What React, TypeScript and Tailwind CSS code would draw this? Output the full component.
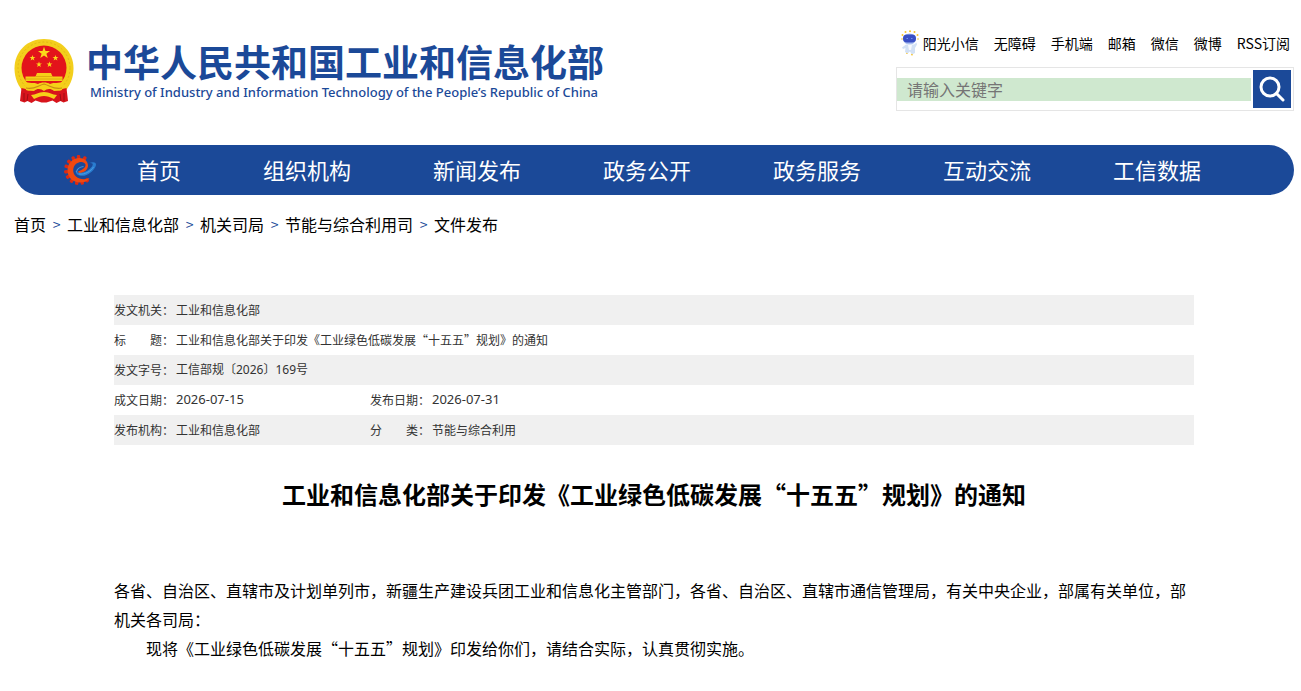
import { type ReactNode } from "react";

const topLinks = ["无障碍", "手机端", "邮箱", "微信", "微博", "RSS订阅"];

const navItems = ["组织机构", "新闻发布", "政务公开", "政务服务", "互动交流", "工信数据"];

const crumbs = ["首页", "工业和信息化部", "机关司局", "节能与综合利用司", "文件发布"];

const star = "M0-5 1.2-1.6 4.8-1.6 1.9.6 3 4 0 1.9-3 4-1.9.6-4.8-1.6-1.2-1.6Z";

function Emblem() {
  return (
    <svg viewBox="0 0 60 66" className="h-[66px] w-[60px] shrink-0" aria-hidden="true">
      {/* wreath */}
      <path d="M30 1C13 1 .5 13.500.5 30.500c0 10 4 18.500 10 24.500h39c6-6 10-14.500 10-24.500C59.500 13.500 47 1 30 1Z" fill="#f3cf1c" />
      <circle cx="30" cy="30" r="26" fill="none" stroke="#e0b014" strokeWidth=".8" strokeDasharray="2 2" />
      {/* ribbon */}
      <path d="M7.500 50 20 53l20 0 12.500-3 1.500 13-4.500 1.500-3-1.500-4 2-4-2.500-6 2h-5l-6-2-4 2.500-4-2-3 1.500-4.500-1.500Z" fill="#d8141c" />
      <path d="M10 55v8M14 56l-1 7M46 56l1 7M50 55v8" stroke="#9e0d14" strokeWidth="1" />
      <circle cx="30" cy="30" r="22.500" fill="#e3131b" />
      {/* stars */}
      <path d={star} transform="translate(30 15) scale(1.250)" fill="#fbd91a" />
      <path d={star} transform="translate(18.500 20) scale(.62)" fill="#fbd91a" />
      <path d={star} transform="translate(41.500 20) scale(.62)" fill="#fbd91a" />
      <path d={star} transform="translate(25 26.500) scale(.62)" fill="#fbd91a" />
      <path d={star} transform="translate(35.500 26.500) scale(.62)" fill="#fbd91a" />
      {/* gate */}
      <path d="M23 35h14l1.500 3.500h10V43h-37v-4.500h10Z" fill="#f6cf18" />
      <path d="M12 41h36M22 38.500h16" stroke="#d9a30f" strokeWidth=".8" />
      {/* gear and knots */}
      <path d="M10 43c5 3 10 1 14 3 3-2 9-2 12 0 4-2 9 0 14-3l-2 9c-5 2-9 0-12-1-3 3-9 3-12 0-3 1-7 3-12 1Z" fill="#f6cf18" />
      <path d="M12 50c8 2 11-2 18-4 7 2 10 6 18 4" fill="none" stroke="#c98d12" strokeWidth="1.200" />
      <path d="M20 53c4-3 7-2 10 0 3-2 6-3 10 0l-2 3c-3-2-5-2-8 0-3-2-5-2-8 0Z" fill="#d8141c" />
      <path d="M17 57c5 0 7-3 13-3s8 3 13 3l-3 4c-4-2-7-3-10-3s-6 1-10 3Z" fill="#f6cf18" />
    </svg>
  );
}

function Robot() {
  return (
    <svg viewBox="0 0 18 26" className="h-[26px] w-[18px]" aria-hidden="true">
      <g fill="#f8c52c">
        <circle cx="9" cy="1.200" r="1" />
        <circle cx="4.500" cy="2" r="1" />
        <circle cx="13.500" cy="2" r="1" />
        <circle cx="1.500" cy="5" r="1" />
        <circle cx="16.500" cy="5" r="1" />
        <circle cx="1" cy="9" r=".8" />
        <circle cx="17" cy="9" r=".8" />
        <circle cx="6" cy="23" r="1" />
        <circle cx="11" cy="24.500" r="1" />
      </g>
      <ellipse cx="8.500" cy="9" rx="6.500" ry="5.500" fill="#a9bff0" />
      <rect x="2" y="4.500" width="13" height="8" rx="4" fill="#3a4fc4" />
      <path d="M5.500 8.500h1.500M10 8.500h1.500" stroke="#6f90f0" strokeWidth="1" />
      <path d="M5 14.500h8l2.500-2 .5 2-2 3.500v5l-3 1.500-2-3-2.500 2-2.500-1.500.5-4-2.500 1L1 17.500Z" fill="#d3e1f5" />
      <path d="M7 15h4l-1 5H8Z" fill="#f6f9fe" />
    </svg>
  );
}

function GearLogo() {
  const teeth = [52, 76, 100, 124, 148, 172, 196, 220, 244, 268, 296];
  return (
    <svg viewBox="0 0 32 32" className="size-8 shrink-0" aria-hidden="true">
      {teeth.map((deg) => (
        <rect key={deg} x="26" y="14.300" width="4" height="3.400" rx="1.200" fill="#dd2a12" transform={`rotate(${deg} 15 16)`} />
      ))}
      {/* body of the e */}
      <path
        d="M24 11.500C24 7 20 4 15.500 4 8.500 4 3.500 9.500 3.500 16.500S9 28.500 16 28.500c4.500 0 8-1.500 9.500-4.500-4.500 2-10 1.500-13.500-1.500-4-3.500-3.500-10 .5-13C16 7 20.500 7.500 21.500 10.500c.5 2-1.500 4-4 5.500l-3.500 1.500 1 2c5-.8 9-3.500 9-8Z"
        fill="#f0480f"
      />
      {/* blue swoosh */}
      <path d="M11.500 17c.5 4.500 6 6 11 4 5.500-2.200 9.500-7.500 9.500-10.500 0-2.500-3-3-6.500-1.500 2.500-.2 4 .5 3 2.500-1.500 3-6 6.500-10.500 7.200-3 .5-5.500-.2-6.500-1.700Z" fill="#2a7dd0" />
      <path d="M12.500 18c.5-3 3-5 7-5.500" fill="none" stroke="#3f97e0" strokeWidth="1.200" />
      <path d="M15 20c6 1 12-3 14.500-7" fill="none" stroke="#4fa6ea" strokeWidth=".8" />
    </svg>
  );
}

function SearchBox() {
  return (
    <form className="flex h-11 w-[398px] items-center justify-between border border-[#e5e5e5] pr-0.5" onSubmit={(e) => e.preventDefault()}>
      <input
        type="text"
        aria-label="搜索"
        placeholder="请输入关键字"
        className="h-[23px] min-w-0 flex-1 bg-[#cfe8cf] px-2.5 text-base/[23px] text-black outline-none placeholder:text-[#757575]"
      />
      <button type="submit" aria-label="搜索" className="ml-0.5 flex size-[38px] cursor-pointer items-center justify-center bg-[#1b4998]">
        <svg viewBox="0 0 26 26" className="size-[26px]" fill="none" stroke="#fff" strokeWidth="3" strokeLinecap="round">
          <circle cx="11" cy="11" r="9" />
          <path d="m17.500 17.500 6.500 6.500" />
        </svg>
      </button>
    </form>
  );
}

// dates in the info table, set a little larger than the labels
function DateText({ children }: { children: ReactNode }) {
  return <span className="block font-['Noto_Sans',sans-serif] text-[13px]">{children}</span>;
}

function InfoTable() {
  return (
    <table className="mt-[59px] w-full table-fixed border-collapse text-left text-xs text-[#333]">
      <colgroup>
        <col className="w-[62px]" />
        <col className="w-[194px]" />
        <col className="w-[62px]" />
        <col />
      </colgroup>
      <tbody className="[&_td]:h-[30px] [&_td]:p-0 [&_th]:p-0 [&_th]:font-normal [&_th]:whitespace-nowrap [&_tr:nth-child(odd)]:bg-[#f0f0f0]">
        <tr>
          <th scope="row">发文机关：</th>
          <td colSpan={3}>工业和信息化部</td>
        </tr>
        <tr>
          <th scope="row">标　　题：</th>
          <td colSpan={3}>工业和信息化部关于印发《工业绿色低碳发展“十五五”规划》的通知</td>
        </tr>
        <tr>
          <th scope="row">发文字号：</th>
          <td colSpan={3} className="font-['Noto_Sans','Noto_Sans_CJK_SC',sans-serif]">工信部规〔2026〕169号</td>
        </tr>
        <tr>
          <th scope="row">成文日期：</th>
          <td><DateText>2026-07-15</DateText></td>
          <th scope="row">发布日期：</th>
          <td><DateText>2026-07-31</DateText></td>
        </tr>
        <tr>
          <th scope="row">发布机构：</th>
          <td>工业和信息化部</td>
          <th scope="row">分　　类：</th>
          <td>节能与综合利用</td>
        </tr>
      </tbody>
    </table>
  );
}

export default function App() {
  return (
    <div lang="zh-CN" className="bg-white pr-[7px] pb-6 pl-3.5 font-['Noto_Sans_CJK_SC',sans-serif] text-black">
      {/* Header */}
      <header className="flex items-start justify-between">
        <a href="#" className="mt-[38px] flex gap-3 text-[#1b4998]">
          <Emblem />
          <span className="block">
            <span className="block text-[37px]/[46px] font-bold whitespace-nowrap">中华人民共和国工业和信息化部</span>
            <span lang="en" className="block pl-1 font-['Noto_Sans',sans-serif] text-[13px]/4 font-medium whitespace-nowrap">
              Ministry of Industry and Information Technology of the People’s Republic of China
            </span>
          </span>
        </a>

        <div className="mt-[30px] flex flex-col items-end">
          <div className="flex items-center gap-[15px] pr-1 text-sm whitespace-nowrap">
            <a href="#" className="flex items-center gap-1">
              <Robot />
              阳光小信
            </a>
            {topLinks.map((link) => (
              <a key={link} href="#" className="hover:text-[#1b4998]">{link}</a>
            ))}
          </div>
          <div className="mt-[11px]">
            <SearchBox />
          </div>
        </div>
      </header>

      {/* Main nav */}
      <nav className="mt-[34px] flex h-[50px] items-center rounded-full bg-[#1b4998] pr-[52px] pl-[50px] text-[22px] text-white">
        <GearLogo />
        <a href="#" className="w-[126px] pb-0.5 text-center">首页</a>
        {navItems.map((item) => (
          <a key={item} href="#" className="flex-1 pb-0.5 text-center whitespace-nowrap">{item}</a>
        ))}
      </nav>

      {/* Breadcrumb */}
      <nav aria-label="当前位置" className="mt-[17px] flex items-center text-base">
        {crumbs.map((crumb, i) => (
          <span key={crumb} className="flex items-center">
            {i > 0 && <span className="w-[21px] text-center text-sm text-[#1b4998]">&gt;</span>}
            <a href="#">{crumb}</a>
          </span>
        ))}
      </nav>

      {/* Document */}
      <main className="mx-[100px]">
        <InfoTable />
        <h1 className="mt-[31px] text-center text-2xl/9 font-bold">工业和信息化部关于印发《工业绿色低碳发展“十五五”规划》的通知</h1>
        <div className="mt-16 text-base/[29px]">
          <p>
            各省、自治区、直辖市及计划单列市，新疆生产建设兵团工业和信息化主管部门，各省、自治区、直辖市通信管理局，有关中央企业，部属有关单位，部机关各司局：
          </p>
          <p className="indent-8">现将《工业绿色低碳发展“十五五”规划》印发给你们，请结合实际，认真贯彻实施。</p>
        </div>
      </main>
    </div>
  );
}
